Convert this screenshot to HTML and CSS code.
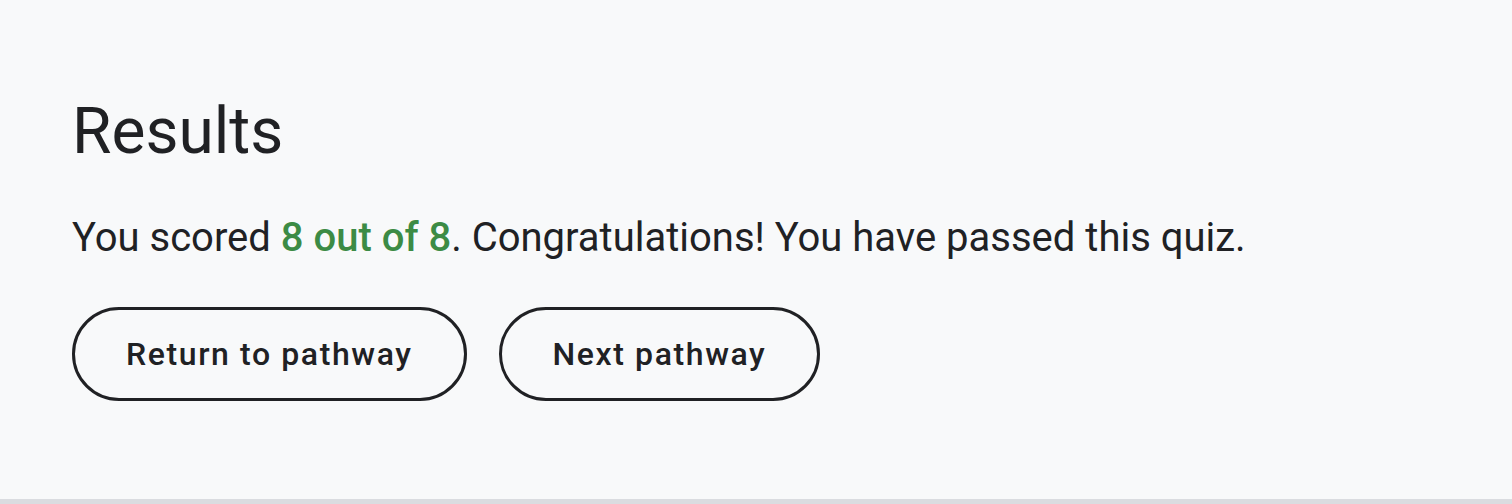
FILE: index.html
```html
<!DOCTYPE html>
<html lang="en">
<head>
<meta charset="utf-8">
<title>Results</title>
<link rel="stylesheet" href="styles.css">
</head>
<body>
<section class="results">
  <h1 class="results-title">Results</h1>
  <p class="results-text">You scored <span class="score">8 out of 8</span>. Congratulations! You have passed this quiz.</p>
  <div class="actions">
    <button class="btn" type="button">Return to pathway</button>
    <button class="btn" type="button">Next pathway</button>
  </div>
</section>
</body>
</html>
```

FILE: styles.css
```css
html, body {
  margin: 0;
  padding: 0;
  background: #f8f9fa;
}
body {
  font-family: Roboto, "Noto Sans", sans-serif;
  color: #202124;
}
.results {
  box-sizing: border-box;
  height: 504px;
  padding: 92px 72px 0;
  border-bottom: 5px solid #dadce0;
}
.results-title {
  margin: 0;
  font-size: 64px;
  line-height: 80px;
  font-weight: 400;
}
.results-text {
  margin: 40px 0 0;
  font-size: 40px;
  line-height: 52px;
  font-weight: 400;
}
.score {
  color: #3c8b45;
  font-weight: 500;
}
.actions {
  display: flex;
  gap: 32px;
  margin-top: 43px;
}
.btn {
  box-sizing: border-box;
  height: 94px;
  padding: 0 51px;
  border: 3px solid #202124;
  border-radius: 47px;
  background: transparent;
  color: #202124;
  font-family: inherit;
  font-size: 32px;
  font-weight: 500;
  letter-spacing: 1.6px;
}
```
